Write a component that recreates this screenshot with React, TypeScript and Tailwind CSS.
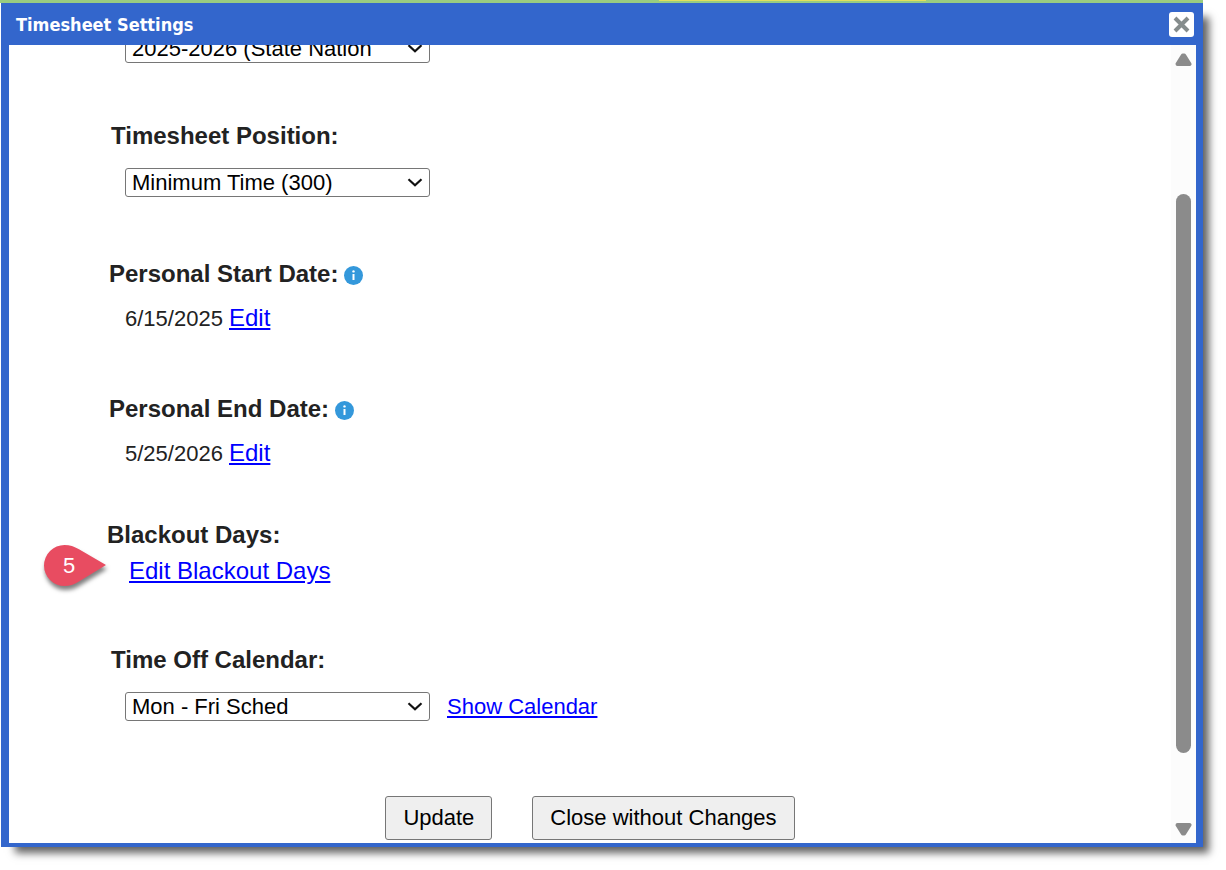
import type { ReactNode, SelectHTMLAttributes } from "react";
import { useState } from "react";
import { clsx } from "clsx";

function SelectBox({ className, children, ...props }: SelectHTMLAttributes<HTMLSelectElement>) {
  return (
    <div className={clsx("relative w-[305px]", className)}>
      <select
        {...props}
        className="block h-[29px] w-full appearance-none rounded-[3px] border border-[#767676] bg-white pr-10 pl-1.5 text-[22px] leading-[27px] text-black"
      >
        {children}
      </select>
      <svg
        className="pointer-events-none absolute top-2.5 right-[7px]"
        width="16"
        height="10"
        viewBox="0 0 16 10"
        fill="none"
        stroke="#111"
        strokeWidth="2.2"
      >
        <path d="M1.5 1.2 8 7.2l6.5-6" />
      </svg>
    </div>
  );
}

function InfoIcon() {
  return (
    <svg width="19" height="19" viewBox="0 0 19 19" className="mt-[3px]" role="img" aria-label="Info">
      <circle cx="9.5" cy="9.5" r="9.5" fill="#3498db" />
      <circle cx="9.5" cy="5.4" r="1.2" fill="#fff" />
      <path d="M9.5 8v6" stroke="#fff" strokeWidth="2" />
    </svg>
  );
}

function TextLink({ className, children }: { className?: string; children: ReactNode }) {
  return (
    <a href="#" className={clsx("text-[#0000ff] underline", className)}>
      {children}
    </a>
  );
}

function DateSection({ title, date, className }: { title: string; date: string; className?: string }) {
  return (
    <section className={className}>
      <div className="flex items-center gap-1.5 pl-[100px]">
        <h2 className="text-2xl leading-7 font-bold">{title}</h2>
        <InfoIcon />
      </div>
      <p className="mt-4 pl-[116px] text-[22px] leading-7">
        {date} <TextLink className="text-2xl leading-7">Edit</TextLink>
      </p>
    </section>
  );
}

// Numbered callout pointing at the blackout link
function StepMarker({ step }: { step: number }) {
  return (
    <div className="absolute top-6 left-[35px] flex h-[42px] w-[62px] items-center">
      <svg
        className="absolute inset-0 drop-shadow-[1px_4px_2px_rgba(0,0,0,0.5)]"
        width="62"
        height="42"
        viewBox="0 0 62 42"
      >
        <path
          d="M62 20 35 4.2C30 1.5 26 0 20.500 0A20.500 20.500 0 0 0 20.500 41C26 41 30 39.500 35 36.500Z"
          fill="#e84c61"
        />
      </svg>
      <span className="relative w-[50px] text-center text-[22px] leading-7 text-white">{step}</span>
    </div>
  );
}

function ScrollBar() {
  return (
    <div className="flex w-[25px] flex-col items-center bg-[#fcfcfc] pt-2 pb-[7px]" aria-hidden="true">
      <svg width="17" height="13" viewBox="0 0 17 13" fill="#8b8b8b" stroke="#8b8b8b" strokeLinejoin="round" strokeWidth="4">
        <path d="M2.500 11 7.800 2.500h1.400L14.500 11Z" />
      </svg>
      <div className="grow-[128]" />
      <div className="w-[15px] grow-[559] rounded-full bg-[#8b8b8b]" />
      <div className="grow-[70]" />
      <svg width="17" height="13" viewBox="0 0 17 13" fill="#8b8b8b" stroke="#8b8b8b" strokeLinejoin="round" strokeWidth="4">
        <path d="M2.500 2 7.800 10.500h1.400L14.500 2Z" />
      </svg>
    </div>
  );
}

const buttonClass =
  "h-11 rounded-[3px] border border-[#767676] bg-[#efefef] px-[17px] text-[22px] leading-7 text-black";

export default function App() {
  const [year, setYear] = useState("2025");
  const [position, setPosition] = useState("300");
  const [calendar, setCalendar] = useState("mon-fri");

  return (
    <div className="bg-white pr-[23px] pb-[23px] font-['Liberation_Sans',Arial,sans-serif] text-[#222]">
      <div className="flex h-[3px] items-start bg-[#99cc80]">
        <div className="ml-[54.8%] h-px w-[22.2%] bg-[#e2e05c]" />
      </div>
      <div
        role="dialog"
        aria-labelledby="dialog-title"
        className="ml-px bg-[#3366cc] pr-[7px] pb-1 pl-2 shadow-[10px_10px_8px_-4px_rgba(0,0,0,0.62)]"
      >
        <header className="flex h-[42px] items-center justify-between pr-0.5 pl-[7px]">
          <h1
            id="dialog-title"
            className="pt-0.5 font-['DejaVu_Sans_Condensed','Noto_Sans',Tahoma,sans-serif] text-lg leading-6 font-bold text-white"
          >
            Timesheet Settings
          </h1>
          <button
            type="button"
            aria-label="Close"
            className="flex size-[25px] items-center justify-center rounded-[3px] bg-white"
          >
            <svg width="17" height="17" viewBox="0 0 17 17" stroke="#858c8c" strokeWidth="4">
              <path d="m2 2 13 13M15 2 2 15" />
            </svg>
          </button>
        </header>

        <div className="flex bg-white">
          <main className="min-w-0 flex-1 overflow-hidden pb-[3px]">
            {/* partly scrolled under the title bar */}
            <SelectBox
              aria-label="Fiscal Year"
              value={year}
              onChange={(e) => setYear(e.target.value)}
              className="-mt-[11px] ml-[116px]"
            >
              <option value="2025">2025-2026 (State Nation</option>
            </SelectBox>

            <section className="mt-[59px]">
              <label htmlFor="position" className="block pl-[102px] text-2xl leading-7 font-bold">
                Timesheet Position:
              </label>
              <SelectBox
                id="position"
                value={position}
                onChange={(e) => setPosition(e.target.value)}
                className="mt-[18px] ml-[116px]"
              >
                <option value="300">Minimum Time (300)</option>
              </SelectBox>
            </section>

            <DateSection title="Personal Start Date:" date="6/15/2025" className="mt-[63px]" />
            <DateSection title="Personal End Date:" date="5/25/2026" className="mt-[62px]" />

            <section className="relative mt-[53px]">
              <h2 className="pl-[98px] text-2xl leading-7 font-bold">Blackout Days:</h2>
              <p className="mt-2 pl-[120px] text-2xl leading-7">
                <TextLink>Edit Blackout Days</TextLink>
              </p>
              <StepMarker step={5} />
            </section>

            <section className="mt-[61px]">
              <label htmlFor="calendar" className="block pl-[102px] text-2xl leading-7 font-bold">
                Time Off Calendar:
              </label>
              <div className="mt-[18px] flex items-center gap-[17px] pl-[116px]">
                <SelectBox id="calendar" value={calendar} onChange={(e) => setCalendar(e.target.value)}>
                  <option value="mon-fri">Mon - Fri Sched</option>
                </SelectBox>
                <TextLink className="text-[22px] leading-7">Show Calendar</TextLink>
              </div>
            </section>

            <div className="mt-[75px] flex justify-center gap-10">
              <button type="button" className={buttonClass}>
                Update
              </button>
              <button type="button" className={buttonClass}>
                Close without Changes
              </button>
            </div>
          </main>
          <ScrollBar />
        </div>
      </div>
    </div>
  );
}
